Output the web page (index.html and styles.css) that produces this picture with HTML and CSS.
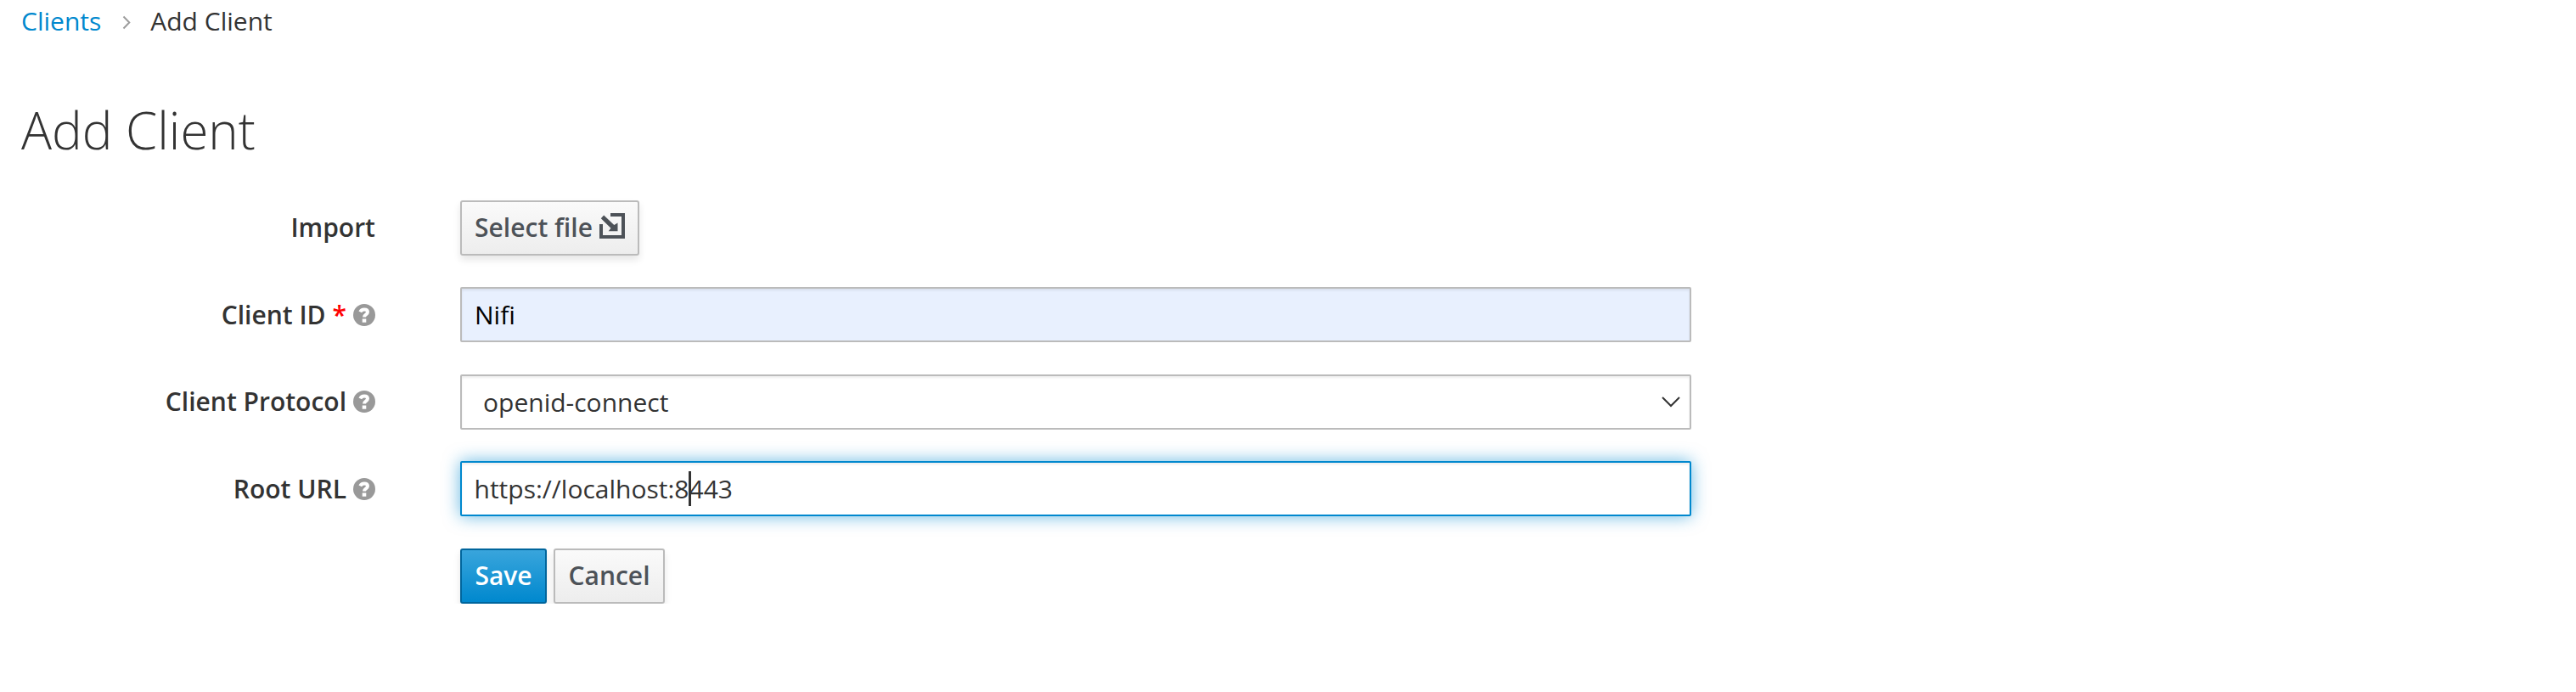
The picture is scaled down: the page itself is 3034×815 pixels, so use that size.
FILE: index.html
```html
<!DOCTYPE html>
<html lang="en">
<head>
<meta charset="utf-8">
<title>Add Client</title>
<link rel="stylesheet" href="styles.css">
</head>
<body>
<main class="page">
  <nav class="breadcrumb">
    <a href="#">Clients</a>
    <svg class="separator" viewBox="0 0 10 17"><path d="M1.500 1.500 8.300 8.500 1.500 15.500"/></svg>
    <span>Add Client</span>
  </nav>
  <h1 class="title">Add Client</h1>
  <form class="form">
    <div class="row">
      <span class="label">Import</span>
      <button type="button" class="btn btn-file"><span>Select file</span>
        <svg class="import-icon" viewBox="0 0 30 30"><path class="frame" d="M13 2H28V28H2V13"/><path class="arrow" d="M5.200 2.500 17.300 14 21.500 11.500V21.300H10.700L13.500 17.700 1.800 6.200Z"/></svg>
      </button>
    </div>
    <div class="row">
      <span class="label"><span>Client ID</span><span class="required">*</span><svg class="help" viewBox="0 0 26 26"><circle cx="13" cy="13" r="13"/><path d="M8.300 9.400Q9.600 6.400 13 6.400Q17 6.400 17 9.600C17 12.400 13 12.200 13 15.400"/><rect x="10.700" y="17.500" width="4.600" height="4.200"/></svg></span>
      <div class="control filled">Nifi</div>
    </div>
    <div class="row">
      <span class="label"><span>Client Protocol</span><svg class="help" viewBox="0 0 26 26"><circle cx="13" cy="13" r="13"/><path d="M8.300 9.400Q9.600 6.400 13 6.400Q17 6.400 17 9.600C17 12.400 13 12.200 13 15.400"/><rect x="10.700" y="17.500" width="4.600" height="4.200"/></svg></span>
      <div class="control select"><span>openid-connect</span><svg class="chevron" viewBox="0 0 22 13"><path d="M1 1 11 11 21 1"/></svg></div>
    </div>
    <div class="row">
      <span class="label"><span>Root URL</span><svg class="help" viewBox="0 0 26 26"><circle cx="13" cy="13" r="13"/><path d="M8.300 9.400Q9.600 6.400 13 6.400Q17 6.400 17 9.600C17 12.400 13 12.200 13 15.400"/><rect x="10.700" y="17.500" width="4.600" height="4.200"/></svg></span>
      <div class="control focused"><span>https://localhost:8</span><span class="caret"></span><span>443</span></div>
    </div>
    <div class="row">
      <span class="label"></span>
      <div class="actions">
        <button type="button" class="btn btn-primary">Save</button>
        <button type="button" class="btn btn-cancel">Cancel</button>
      </div>
    </div>
  </form>
</main>
</body>
</html>
```
FILE: styles.css
```css
* { box-sizing: border-box; }
body {
  margin: 0;
  background: #fff;
  color: #333;
  font: 30px/41px "Open Sans", sans-serif;
}
.page { padding: 4px 25px 0; }
.breadcrumb { display: flex; align-items: center; height: 41px; }
.breadcrumb a { color: #0088ce; text-decoration: none; }
.separator { width: 10px; height: 17px; margin: 4px 23px 0 25px; }
.separator path { fill: none; stroke: #9c9c9c; stroke-width: 2; }
.title { margin: 68px 0 0; font-size: 60px; font-weight: 300; line-height: 80px; height: 80px; }
.form { display: flex; flex-direction: column; gap: 37.4px; margin-top: 43px; }
.row { display: flex; align-items: center; height: 65px; }
.label {
  display: flex;
  align-items: center;
  justify-content: flex-end;
  gap: 8px;
  width: 417px;
  margin-right: 100px;
  padding-bottom: 1.2px;
  font-weight: 600;
}
.required { color: red; }
.help { width: 26px; height: 26px; margin-top: 1px; fill: #999; }
.help path { fill: none; stroke: #fff; stroke-width: 4; }
.help rect { fill: #fff; }
.control {
  display: flex;
  align-items: center;
  width: 1450px;
  height: 65px;
  padding: 0 15px;
  border: 2px solid #bbb;
  border-radius: 2px;
  box-shadow: inset 0 2px 3px rgba(0, 0, 0, .075);
}
.filled { background: #e8f0fe; color: #000; }
.select { justify-content: space-between; padding: 0 11px 0 25px; }
.chevron { width: 22px; height: 13px; }
.chevron path { fill: none; stroke: #333; stroke-width: 2; }
.focused {
  padding-left: 14.5px;
  border-color: #0088ce;
  box-shadow: inset 0 2px 3px rgba(0, 0, 0, .075), 0 0 20px rgba(0, 136, 206, .6);
}
.caret { width: 3px; height: 41px; margin: 0 -2px 0 -1px; background: #333; }
.actions { display: flex; gap: 8px; }
.btn {
  display: flex;
  align-items: center;
  justify-content: center;
  height: 65px;
  padding: 0 0 1.2px;
  border: 2px solid #bbb;
  border-radius: 3px;
  background: linear-gradient(#fafafa, #ededed);
  box-shadow: 0 5px 8px rgba(3, 3, 3, .1);
  color: #4d5258;
  font: inherit;
  font-weight: 600;
}
.btn-file { width: 211px; gap: 8px; }
.import-icon { width: 30px; height: 30px; margin-bottom: 4px; }
.frame { fill: none; stroke: #4d5258; stroke-width: 4; }
.arrow { fill: #4d5258; }
.btn-primary {
  width: 102px;
  border-color: #00659c;
  background: linear-gradient(#39a5dc, #0088ce);
  color: #fff;
}
.btn-cancel { width: 131px; }
```
